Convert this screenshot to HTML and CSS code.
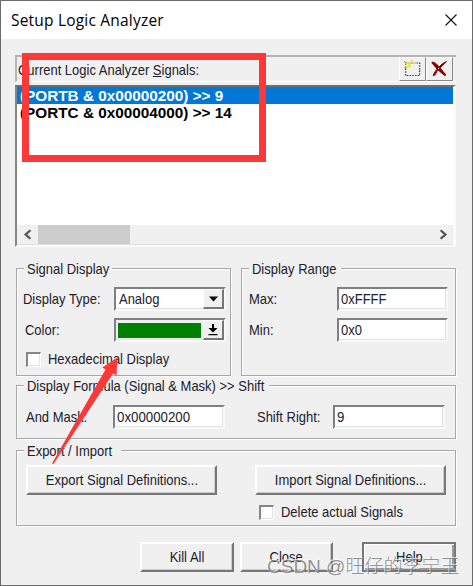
FILE: index.html
```html
<!DOCTYPE html>
<html lang="en">
<head>
<meta charset="utf-8">
<title>Setup Logic Analyzer</title>
<link rel="stylesheet" href="styles.css">
</head>
<body>
<div class="window">
  <header class="titlebar">
    <span class="title">Setup Logic Analyzer</span>
    <svg class="close-icon" width="12" height="12" viewBox="0 0 12 12"><path d="M.5.5l11 11M11.5.5l-11 11" stroke="#111" stroke-width="1.1"/></svg>
  </header>
  <main class="content">
    <div class="list-head">
      <span class="t">Current Logic Analyzer <u>S</u>ignals:</span>
      <div class="tools">
        <div class="tool"><svg width="20" height="18" viewBox="0 0 20 18"><rect x="2.7" y="3" width="14" height="12.500" fill="none" stroke="#333" stroke-width="1.2" stroke-dasharray="1.5 1.2"/><path d="M1.500 2l2 2M9 1.500l-2 2.500M6 2v4M2 6.500h4M4 8l3-3M8 6.500l-2-2M10 3h2" stroke="#eee936" stroke-width="1.5"/><path d="M1 1l2 2M9 .5l-1 1M1 8l2-1" stroke="#77783a" stroke-width=".8"/></svg></div>
        <div class="tool"><svg width="20" height="18" viewBox="0 0 20 18"><path d="M2 2Q5 2 8 5.500l8 9.500-1.500.5L7 9Q4.500 6 2 3z M16.500 1.500Q12 3 8 8q-3 3-5 7.500l2-.5Q7 10 11 7z" fill="#800000" stroke="#800000" stroke-width=".9"/></svg></div>
      </div>
    </div>
    <div class="listbox">
      <div class="row selected"><span class="b">(PORTB &amp; 0x00000200) &gt;&gt; 9</span></div>
      <div class="row"><span class="b">(PORTC &amp; 0x00004000) &gt;&gt; 14</span></div>
      <div class="scrollbar">
        <svg width="20" height="19" viewBox="0 0 20 20"><path d="M12.500 5.500L7.500 10l5 4.500" fill="none" stroke="#555" stroke-width="2.4"/></svg>
        <div class="thumb"></div>
        <svg class="right" width="20" height="19" viewBox="0 0 20 20"><path d="M7.500 5.500L12.500 10l-5 4.500" fill="none" stroke="#555" stroke-width="2.400"/></svg>
      </div>
    </div>
    <div class="pair">
      <section class="group signal">
        <h2><span class="t">Signal Display</span></h2>
        <div class="line type"><span class="t">Display Type:</span>
          <div class="field combo"><span class="t">Analog</span><div class="drop"><svg width="9" height="6" viewBox="0 0 9 6"><path d="M0 .5h9L4.500 5.500z"/></svg></div></div>
        </div>
        <div class="line color"><span class="t">Color:</span>
          <div class="field picker"><div class="swatch"></div><div class="drop"><svg width="10" height="12" viewBox="0 0 10 12"><path d="M4 0h2v4h3.500L5 8.500.5 4H4zM.5 10h9v1.300h-9z"/></svg></div></div>
        </div>
        <div class="line check"><i class="box"></i><span class="t">Hexadecimal Display</span></div>
      </section>
      <section class="group range">
        <h2><span class="t">Display Range</span></h2>
        <div class="line max"><span class="t">Max:</span><div class="field"><span class="t">0xFFFF</span></div></div>
        <div class="line min"><span class="t">Min:</span><div class="field"><span class="t">0x0</span></div></div>
      </section>
    </div>
    <section class="group formula">
      <h2><span class="t">Display Formula (Signal &amp; Mask) &gt;&gt; Shift</span></h2>
      <div class="line"><span class="t">And Mask:</span><div class="field"><span class="t n">0x00000200</span></div><span class="t shift">Shift Right:</span><div class="field"><span class="t n">9</span></div></div>
    </section>
    <section class="group export">
      <h2><span class="t">Export / Import</span></h2>
      <div class="buttons"><button><span class="t">Export Signal Definitions...</span></button><button><span class="t">Import Signal Definitions...</span></button></div>
      <div class="check"><i class="box"></i><span class="t">Delete actual Signals</span></div>
    </section>
    <footer class="actions">
      <button><span class="t">Kill All</span></button><button><span class="t">Close</span></button><button class="default"><span class="t">Help</span></button>
    </footer>
  </main>
  <div class="highlight"></div>
  <svg class="arrow" width="473" height="586" viewBox="0 0 473 586"><path d="M52 463.500L105.500 369.500 102.300 367.500 117.500 357.500 116.500 375.500 113 373.500 53.500 464z" fill="#fc3838"/></svg>
  <div class="watermark">CSDN @旺仔的李宁玉</div>
</div>
</body>
</html>
```
FILE: styles.css
```css
* { box-sizing: border-box; }
body { margin: 0; font: 15px/18px "Liberation Sans", Arial, sans-serif; color: #20202c; }
.window { position: relative; width: 473px; height: 586px; background: #f0f0f0; border: 1px solid #6b6b6b; overflow: hidden; }
.titlebar { height: 38px; background: #fff; display: flex; align-items: center; justify-content: space-between; padding: 0 15px 0 10px; color: #000; }
.title { font: 15.500px/20px "Open Sans", "Noto Sans", sans-serif; letter-spacing: .2px; white-space: nowrap; }
.close-icon { display: block; }
.content { padding: 16px 16px 0 14px; }
.t, .b { display: inline-block; white-space: nowrap; transform: scaleX(.865); transform-origin: 0 50%; }
.t.n { transform: scaleX(.885); }
.b { font-weight: bold; transform: scaleX(1.02); }
.list-head { height: 27px; border-top: 2px solid #b4b4b4; border-left: 2px solid #b4b4b4; border-bottom: 1px solid #fff; display: flex; justify-content: space-between; padding: 0 3px 0 1px; align-items: center; }
.list-head > .t { margin-top: 2px; }
.tools { display: flex; }
.tool { width: 27px; height: 24px; border: 1px solid #fff; border-right-color: #888; border-bottom-color: #888; display: grid; place-items: center; }
.listbox { margin-top: 3px; height: 162px; background: #fff; border: 2px solid #6e6e6e; border-left-color: #858585; border-right: 3px solid #fafafa; border-bottom: 2px solid #fafafa; display: flex; flex-direction: column; }
.row { height: 17px; line-height: 17px; padding-left: 3px; color: #000; }
.selected { background: #0078d7; color: #fff; }
.scrollbar { margin-top: auto; height: 20px; padding-left: 1px; background: #f0f0f0; border-bottom: 1px solid #ddd; display: flex; }
.scrollbar .right { margin-left: auto; }
.thumb { width: 92px; height: 19px; background: #cdcdcd; }
.pair { display: flex; gap: 10px; margin: 21px 0 0 1px; }
.group { border: 1px solid #a7a7a7; box-shadow: 1px 1px #fff, inset 1px 1px #fff; position: relative; }
.group h2 { position: absolute; left: 7px; top: -9px; margin: 0; height: 18px; font: inherit; background: #f0f0f0; padding-left: 3px; }
.signal { width: 215px; height: 108px; padding: 18px 4px 0 6px; }
.range { width: 215px; height: 108px; padding: 18px 7px 0 7px; }
.signal h2 { width: 88px; }
.range h2 { width: 92px; }
.line { display: flex; align-items: center; justify-content: space-between; height: 24px; }
.field { width: 112px; height: 24px; background: #fff; border: 2px solid #808080; border-right-color: #f8f8f8; border-bottom-color: #f8f8f8; box-shadow: inset -1px -1px #e2e2e2; padding-left: 2px; display: flex; align-items: center; }
.range .field { width: 111px; }
.combo { padding-left: 3px; justify-content: space-between; }
.color { margin-top: 7px; padding-left: 2px; }
.drop { width: 21px; height: 20px; background: #f0f0f0; border: 1px solid #fff; border-right: 2px solid #777; border-bottom: 2px solid #777; display: grid; place-items: center; }
.picker { background: #f0f0f0; justify-content: space-between; }
.swatch { width: 83px; height: 15px; background: #008000; }
.check { display: flex; align-items: center; gap: 7px; }
.signal .check { justify-content: flex-start; margin: 5px 0 0 3px; }
.box { width: 15px; height: 15px; background: #fff; border: 2px solid #858585; border-right: 1px solid #fff; border-bottom: 1px solid #fff; box-shadow: inset -1px -1px #e2e2e2; flex: none; }
.min { margin-top: 7px; }
.formula { height: 54px; margin: 9px 0 0 1px; width: 440px; padding: 19px 10px 0 9px; }
.formula h2 { width: 245px; }
.formula .line { display: grid; grid-template-columns: 87px 112px 108px 112px; justify-content: start; }
.formula .shift { margin-left: 32px; }
.export { height: 76px; margin: 11px 0 0 1px; width: 440px; padding: 14px 9px 0 9px; }
.export h2 { width: 97px; }
.buttons { display: flex; justify-content: space-between; }
button { height: 30px; padding: 0; border: 2px solid #fff; border-right-color: #777; border-bottom-color: #777; background: #f0f0f0; font: inherit; color: inherit; box-shadow: inset -1px -1px #ccc; text-align: center; }
button .t { transform-origin: 50% 50%; }
.buttons button { width: 191px; }
.export > .check { margin: 8px 0 0 233px; }
.actions { display: flex; margin: 16px 0 0 125px; }
.actions button { width: 94px; margin-right: 6px; }
.actions .default { margin-left: 23px; margin-right: 0; border: 2px solid #777; box-shadow: inset 1px 1px #fff, inset -2px -2px #999; }
.highlight { position: absolute; left: 21px; top: 52px; width: 244px; height: 109px; border: 7px solid #fc3838; }
.arrow { position: absolute; left: -1px; top: -1px; }
.watermark { position: absolute; left: 266px; top: 554px; font: 300 19px/24px "Liberation Sans", "Noto Sans CJK SC", sans-serif; color: rgba(120,120,120,.8); text-shadow: -1px -1px rgba(255,255,255,.7); white-space: nowrap; }
```
